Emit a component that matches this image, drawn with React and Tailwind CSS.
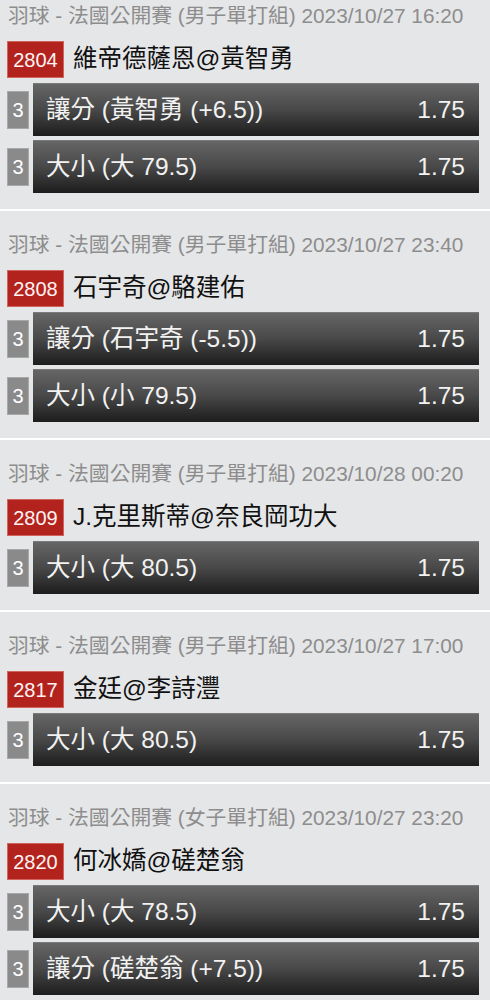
import React from "react";

const matches = [
  {
    league: "羽球 - 法國公開賽 (男子單打組) 2023/10/27 16:20",
    id: "2804",
    teams: "維帝德薩恩@黃智勇",
    bets: [
      { label: "讓分 (黃智勇 (+6.5))", odds: "1.75" },
      { label: "大小 (大 79.5)", odds: "1.75" },
    ],
  },
  {
    league: "羽球 - 法國公開賽 (男子單打組) 2023/10/27 23:40",
    id: "2808",
    teams: "石宇奇@駱建佑",
    bets: [
      { label: "讓分 (石宇奇 (-5.5))", odds: "1.75" },
      { label: "大小 (小 79.5)", odds: "1.75" },
    ],
  },
  {
    league: "羽球 - 法國公開賽 (男子單打組) 2023/10/28 00:20",
    id: "2809",
    teams: "J.克里斯蒂@奈良岡功大",
    bets: [{ label: "大小 (大 80.5)", odds: "1.75" }],
  },
  {
    league: "羽球 - 法國公開賽 (男子單打組) 2023/10/27 17:00",
    id: "2817",
    teams: "金廷@李詩灃",
    bets: [{ label: "大小 (大 80.5)", odds: "1.75" }],
  },
  {
    league: "羽球 - 法國公開賽 (女子單打組) 2023/10/27 23:20",
    id: "2820",
    teams: "何冰嬌@磋楚翁",
    bets: [
      { label: "大小 (大 78.5)", odds: "1.75" },
      { label: "讓分 (磋楚翁 (+7.5))", odds: "1.75" },
    ],
  },
];

function BetRow({ bet }) {
  return (
    <div className="flex items-center h-[53px] pl-[7px] pr-[11px] gap-[4px]">
      <div className="w-[22px] h-[38px] bg-[#8a8a8a] border border-[#a8a8a8] text-white text-[20px] flex items-center justify-center">
        3
      </div>
      <div className="flex-1 h-full flex items-center justify-between pl-[13px] pr-[14px] bg-linear-to-b from-[#666666] via-[#484848] to-[#1d1d1d] border-t border-[#7a7a7a] text-[#f2f2f2] text-[24.5px]">
        <span>{bet.label}</span>
        <span>{bet.odds}</span>
      </div>
    </div>
  );
}

function Match({ match, first }) {
  return (
    <div>
      <div className={first ? "pt-[4px] pb-[16px]" : "pt-[22px] pb-[16px]"}>
        <div className="h-[24px] flex items-center pl-[8px] text-[20.8px] text-[#8d8d8d] whitespace-nowrap">
          {match.league}
        </div>
        <div className="mt-[13px] flex items-center h-[37px] pl-[7px] gap-[9px]">
          <div className="w-[57px] h-full bg-[#b3231d] border border-[#d0645d] text-[#fff3f3] text-[20px] flex items-center justify-center">
            {match.id}
          </div>
          <div className="text-[24.5px] text-[#111]">{match.teams}</div>
        </div>
        <div className="mt-[5px] flex flex-col gap-[4px]">
          {match.bets.map((bet, i) => (
            <BetRow key={i} bet={bet} />
          ))}
        </div>
      </div>
      <div className="h-[2px] bg-white" />
    </div>
  );
}

export default function App() {
  return (
    <div
      className="w-[490px] h-[1000px] overflow-hidden bg-[#e5e6e8]"
      style={{ fontFamily: '"Liberation Sans", "Noto Sans CJK TC", sans-serif' }}
    >
      {matches.map((m, i) => (
        <Match key={m.id} match={m} first={i === 0} />
      ))}
    </div>
  );
}
